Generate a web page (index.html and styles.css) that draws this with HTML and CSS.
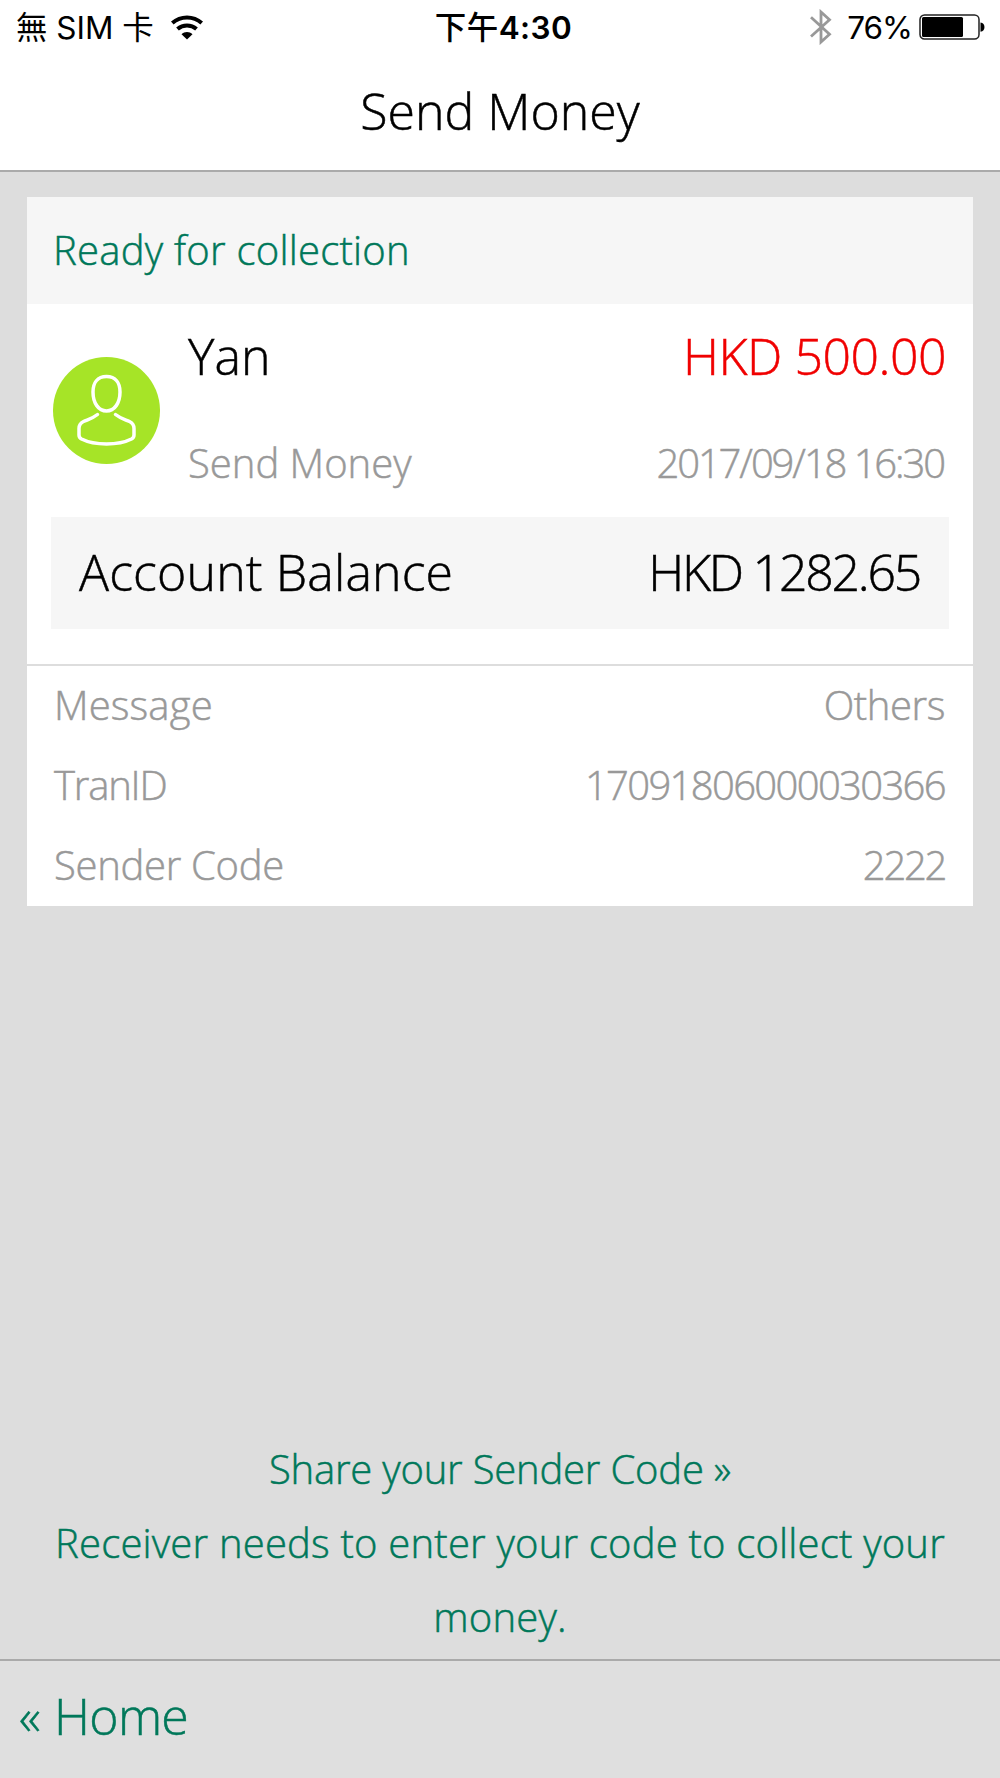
FILE: index.html
```
<!DOCTYPE html>
<html lang="en">
<head>
  <meta charset="UTF-8" />
  <meta name="viewport" content="width=device-width, initial-scale=1.0"/>
  <title>Send Money</title>
  <link rel="stylesheet" href="styles.css">
</head>
<body>

  <header class="header">
    <div class="status-bar">
      <div class="status-left">
        <span class="carrier">無 SIM 卡</span>
        <svg class="wifi" width="32" height="25" viewBox="0 0 32 25">
          <path d="M1.300 8C9.700 .6 22.300 .6 30.700 8" fill="none" stroke="#000" stroke-width="4"/>
          <path d="M6.500 14c5.400-4.800 13.600-4.800 19 0" fill="none" stroke="#000" stroke-width="4"/>
          <path d="M10.500 19.300c3-3.200 8-3.200 11 0L16 24.600z"/>
        </svg>
      </div>
      <div class="time"><span class="meridiem">下午</span>4:30</div>
      <div class="status-right">
        <svg class="bluetooth" width="22" height="36" viewBox="0 0 22 36">
          <path d="M1 8.300l18.500 17L11 33V3l8.500 7.700L1 27.500" fill="none" stroke="#999" stroke-width="2.800"/>
        </svg>
        <span class="percent">76%</span>
        <svg class="battery" width="66" height="26" viewBox="0 0 66 26">
          <rect x="1" y="1" width="59" height="24" rx="4.500" fill="none" stroke="#222" stroke-width="1.500"/>
          <rect x="3" y="3" width="41" height="20" rx="1.500"/>
          <path d="M61.500 8.500c5.300 0 5.300 9.200 0 9.200z"/>
        </svg>
      </div>
    </div>
    <h1>Send Money</h1>
  </header>

  <main class="card">
    <div class="card-head">Ready for collection</div>

    <div class="summary">
      <svg class="avatar" width="107" height="107" viewBox="0 0 107 107">
        <circle cx="53.500" cy="53.500" r="53.500" fill="#a6e427"/>
        <g fill="none" stroke="#fff" stroke-width="3.500" stroke-linecap="round">
          <path d="M53.500 19.500c-9 0-13.500 6.500-13.500 15.500 0 11 5.500 19 13.500 19s13.500-8 13.500-19c0-9-4.500-15.500-13.500-15.500z"/>
          <path d="M44.500 57.500c-5 4-9.500 5-14 7-3 1.400-4.500 3.500-4.500 7v6.500c0 2 .7 3 2.500 4 7 3.500 15.500 5 25 5s18-1.500 25-5c1.800-1 2.500-2 2.500-4v-6.500c0-3.500-1.500-5.600-4.500-7-4.500-2-9-3-14-7"/>
        </g>
      </svg>
      <div class="summary-rows">
        <div class="row row-name">
          <span class="name">Yan</span>
          <span class="amount">HKD 500.00</span>
        </div>
        <div class="row row-type">
          <span>Send Money</span>
          <span class="date">2017/09/18 16:30</span>
        </div>
      </div>
    </div>

    <div class="row balance">
      <span class="balance-label">Account Balance</span>
      <span class="balance-value">HKD 1282.65</span>
    </div>

    <div class="details">
      <div class="row">
        <span class="label-message">Message</span>
        <span class="value-message">Others</span>
      </div>
      <div class="row">
        <span class="label-id">TranID</span>
        <span class="value-id">17091806000030366</span>
      </div>
      <div class="row">
        <span class="label-code">Sender Code</span>
        <span class="value-code">2222</span>
      </div>
    </div>
  </main>

  <div class="share">
    <a class="share-link">Share your Sender Code »</a>
    <p>Receiver needs to enter your code to collect your money.</p>
  </div>

  <footer class="footer">
    <a class="home"><span class="arrow">«</span>Home</a>
  </footer>

</body>
</html>
```
FILE: styles.css
```
* {
  box-sizing: border-box;
}

body {
  font-family: 'Open Sans', 'Noto Sans', sans-serif;
  font-weight: 300;
  font-size: 40px;
  -webkit-text-stroke: 0.5px;
  background: #ddd;
  color: #000;
  margin: 0;
  height: 1778px;
  display: flex;
  flex-direction: column;
}

.header {
  background: #fff;
  height: 172px;
  border-bottom: 2px solid #aaa;
}

.status-bar {
  display: grid;
  grid-template-columns: 1fr auto 1fr;
  height: 56px;
  padding: 0 15px 0 16px;
  font-family: Inter, 'Noto Sans CJK TC', sans-serif;
  font-size: 31.5px;
  font-weight: 400;
  line-height: 55px;
  -webkit-text-stroke: 0;
}

.status-left,
.status-right {
  display: flex;
  align-items: center;
  height: 54px;
  white-space: nowrap;
}

.status-right {
  justify-content: flex-end;
}

.wifi {
  margin-left: 17px;
}

.time {
  padding-left: 6px;
  font-weight: 600;
  letter-spacing: 0.4px;
}

.meridiem {
  font-weight: 500;
}

.percent {
  margin: 0 7px 0 15px;
  letter-spacing: -1px;
}

h1 {
  margin: 0;
  font-size: 50px;
  font-weight: 300;
  line-height: 110px;
  text-align: center;
}

.card {
  background: #fff;
  margin: 25px 27px 0;
  padding-bottom: 2px;
}

.card-head {
  background: #f6f6f6;
  color: #00785a;
  height: 107px;
  padding: 0 26px;
  line-height: 105px;
  letter-spacing: 0.25px;
}

.row {
  display: flex;
  justify-content: space-between;
}

.summary {
  display: flex;
  align-items: center;
  height: 213px;
  padding: 0 26px;
}

.summary-rows {
  flex: 1;
  margin-left: 28px;
}

.row-name {
  font-size: 50px;
  height: 101px;
  line-height: 105px;
}

.amount {
  color: #f00000;
  margin-right: 1px;
  letter-spacing: -0.5px;
}

.row-type {
  color: #999;
  height: 112px;
  line-height: 115px;
}

.date {
  margin-right: 3px;
  letter-spacing: -2.1px;
}

.balance {
  background: #f6f6f6;
  height: 112px;
  margin: 0 24px 35px;
  padding: 0 29px 0 28px;
  font-size: 50px;
  line-height: 111px;
}

.balance-label {
  letter-spacing: 0.15px;
}

.balance-value {
  letter-spacing: -2.25px;
}

.details {
  color: #999;
  border-top: 2px solid #ddd;
}

.details .row {
  height: 80px;
  padding: 0 28px 0 27px;
  line-height: 82px;
}

.details .row:first-child {
  height: 78px;
  line-height: 78px;
}

.label-message {
  letter-spacing: 0.15px;
}

.value-message {
  letter-spacing: -0.4px;
}

.label-id {
  letter-spacing: -1.2px;
}

.value-id {
  letter-spacing: -1.65px;
}

.label-code {
  letter-spacing: -0.3px;
}

.value-code {
  letter-spacing: -2.3px;
}

.share {
  margin: auto 40px 5px;
  color: #00785a;
  text-align: center;
  line-height: 74px;
  letter-spacing: 0.2px;
}

.share-link {
  letter-spacing: -0.2px;
}

.share p {
  margin: 0;
}

.footer {
  height: 119px;
  padding-left: 19px;
  background: #dfdfdf;
  border-top: 2px solid #aaa;
}

.home {
  color: #00785a;
  font-size: 50px;
  line-height: 111px;
  letter-spacing: -0.7px;
}

.arrow {
  margin-right: 14px;
}
```
